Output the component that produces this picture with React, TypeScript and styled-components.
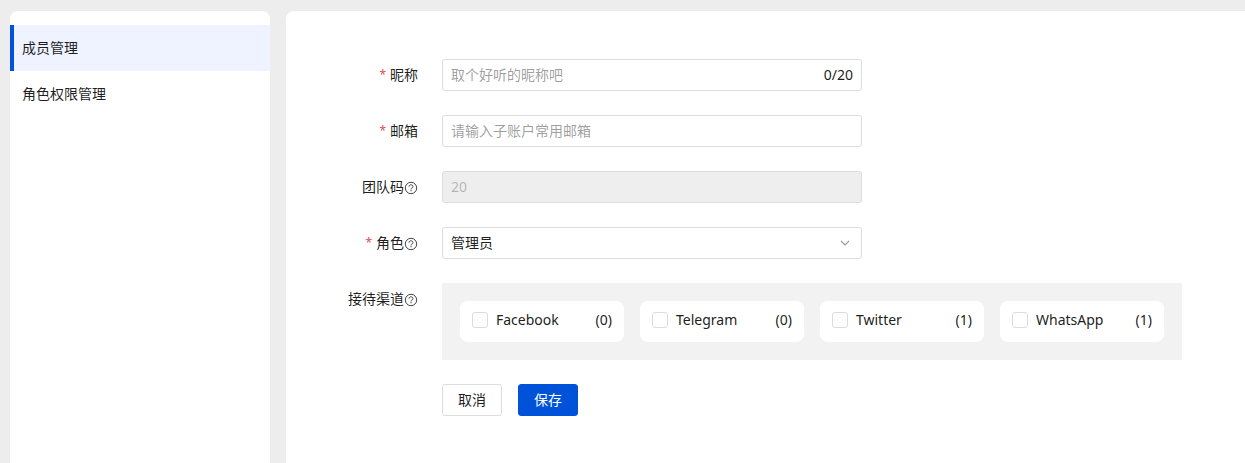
import React from "react";
import styled, { createGlobalStyle } from "styled-components";

const GlobalStyle = createGlobalStyle`
  *, *::before, *::after { box-sizing: border-box; }
  body {
    margin: 0;
    background: #ededed;
    color: rgba(0, 0, 0, 0.9);
    font: 14px/22px "Noto Sans", "Noto Sans CJK SC", sans-serif;
  }
  button, input, select { font: inherit; color: inherit; }
`;

const Page = styled.div`
  display: flex;
  gap: 16px;
  min-height: 100vh;
  padding: 11px 0 0 10px;
`;

const Sidebar = styled.nav`
  flex: 0 0 260px;
  padding: 14px 0;
  background: #fff;
  border-radius: 8px 8px 0 0;
`;

const NavLink = styled.a<{ $active?: boolean }>`
  display: block;
  padding: 12px 8px;
  border-left: 4px solid ${(p) => (p.$active ? "#0052d9" : "transparent")};
  background: ${(p) => (p.$active ? "#eff3ff" : "transparent")};
  color: inherit;
  text-decoration: none;
`;

const Main = styled.main`
  flex: 1;
  min-width: 0;
  padding: 48px 24px;
  background: #fff;
  border-radius: 8px 0 0 0;
`;

const Form = styled.form`
  display: flex;
  flex-direction: column;
  gap: 24px;
`;

const Row = styled.div`
  display: grid;
  grid-template-columns: 108px minmax(0, 1fr);
  column-gap: 24px;
`;

const LabelCell = styled.div`
  display: flex;
  align-items: center;
  justify-content: flex-end;
  height: 32px;
  white-space: nowrap;
`;

const Required = styled.span`
  margin-right: 4px;
  color: #e34d59;
  font-size: 12px;
`;

const HelpIcon = styled.svg`
  width: 14px;
  height: 14px;
  margin-top: 2px;
`;

const Control = styled.div<{ $disabled?: boolean }>`
  display: flex;
  align-items: center;
  width: 100%;
  max-width: 420px;
  height: 32px;
  padding: 0 8px;
  border: 1px solid #dcdcdc;
  border-radius: 3px;
  background: ${(p) => (p.$disabled ? "#eee" : "#fff")};
`;

const TextInput = styled.input`
  flex: 1;
  min-width: 0;
  height: 22px;
  padding: 0;
  border: 0;
  outline: 0;
  background: transparent;
  &::placeholder { color: rgba(0, 0, 0, 0.4); opacity: 1; }
  &:disabled { color: rgba(0, 0, 0, 0.26); }
`;

const Select = styled.select`
  flex: 1;
  height: 30px;
  padding: 0;
  border: 0;
  outline: 0;
  appearance: none;
  background: transparent;
`;

const Chevron = styled.svg`
  width: 16px;
  height: 16px;
  pointer-events: none;
`;

const ChannelPanel = styled.div`
  display: grid;
  grid-template-columns: repeat(4, minmax(0, 1fr));
  gap: 16px;
  max-width: 740px;
  padding: 18px;
  background: #f2f2f2;
`;

const Channel = styled.label`
  display: flex;
  align-items: center;
  gap: 8px;
  padding: 8px 12px 11px;
  border-radius: 8px;
  background: #fff;
`;

const Checkbox = styled.input`
  appearance: none;
  width: 16px;
  height: 16px;
  margin: 0;
  border: 1px solid #dcdcdc;
  border-radius: 3px;
  background: #fff;
  &:checked { background: #0052d9; border-color: #0052d9; }
`;

const Count = styled.span`
  margin-left: auto;
`;

const Actions = styled.div`
  display: flex;
  gap: 16px;
  grid-column: 2;
`;

const Button = styled.button<{ $primary?: boolean }>`
  height: 32px;
  padding: 0 15px;
  border: 1px solid ${(p) => (p.$primary ? "#0052d9" : "#dcdcdc")};
  border-radius: 3px;
  background: ${(p) => (p.$primary ? "#0052d9" : "#fff")};
  color: ${(p) => (p.$primary ? "#fff" : "inherit")};
`;

function Help() {
  return (
    <HelpIcon viewBox="0 0 14 14" fill="none" stroke="#333" aria-hidden="true">
      <circle cx="7" cy="7" r="5.7" strokeWidth="0.9" />
      <path d="M5 5.7C5 4.5 5.8 3.8 7 3.8s2 .7 2 1.8c0 1.3-2 1.3-2 2.8" strokeWidth="0.9" />
      <path d="M7 9.2v1.1" strokeWidth="1" />
    </HelpIcon>
  );
}

interface FieldProps {
  id: string;
  label: string;
  required?: boolean;
  help?: boolean;
  children: React.ReactNode;
}

function Field({ id, label, required, help, children }: FieldProps) {
  return (
    <Row>
      <LabelCell>
        {required && <Required>*</Required>}
        <label htmlFor={id}>{label}</label>
        {help && <Help />}
      </LabelCell>
      {children}
    </Row>
  );
}

const channels = [
  { name: "Facebook", count: 0 },
  { name: "Telegram", count: 0 },
  { name: "Twitter", count: 1 },
  { name: "WhatsApp", count: 1 },
];

export default function App() {
  return (
    <>
      <GlobalStyle />
      <Page>
        <Sidebar>
          <NavLink href="#members" $active>成员管理</NavLink>
          <NavLink href="#roles">角色权限管理</NavLink>
        </Sidebar>
        <Main>
          <Form onSubmit={(e) => e.preventDefault()}>
            <Field id="nickname" label="昵称" required>
              <Control>
                <TextInput id="nickname" maxLength={20} placeholder="取个好听的昵称吧" />
                <span>0/20</span>
              </Control>
            </Field>
            <Field id="email" label="邮箱" required>
              <Control>
                <TextInput id="email" type="email" placeholder="请输入子账户常用邮箱" />
              </Control>
            </Field>
            <Field id="team" label="团队码" help>
              <Control $disabled>
                <TextInput id="team" defaultValue="20" disabled />
              </Control>
            </Field>
            <Field id="role" label="角色" required help>
              <Control>
                <Select id="role">
                  <option>管理员</option>
                </Select>
                <Chevron viewBox="0 0 16 16" fill="none" stroke="#999" strokeWidth="1.1" aria-hidden="true">
                  <path d="M4 6 8 10 12 6" />
                </Chevron>
              </Control>
            </Field>
            <Row role="group" aria-labelledby="channels">
              <LabelCell>
                <span id="channels">接待渠道</span>
                <Help />
              </LabelCell>
              <ChannelPanel>
                {channels.map((c) => (
                  <Channel key={c.name}>
                    <Checkbox type="checkbox" />
                    <span>{c.name}</span>
                    <Count>({c.count})</Count>
                  </Channel>
                ))}
              </ChannelPanel>
            </Row>
            <Row>
              <Actions>
                <Button type="button">取消</Button>
                <Button type="submit" $primary>保存</Button>
              </Actions>
            </Row>
          </Form>
        </Main>
      </Page>
    </>
  );
}
